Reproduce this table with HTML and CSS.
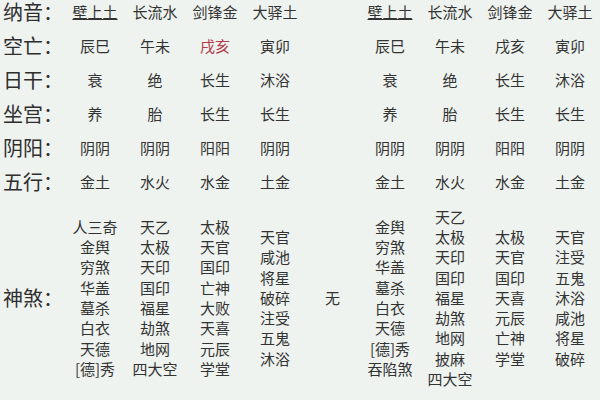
FILE: index.html
```html
<!DOCTYPE html>
<html lang="zh-CN">
<head>
<meta charset="utf-8">
<title>八字排盘</title>
<link rel="stylesheet" href="styles.css">
</head>
<body>
<div class="chart">
  <div class="row">
    <div class="label">纳音：</div>
    <div class="cell"><span class="link">壁上土</span></div>
    <div class="cell">长流水</div>
    <div class="cell">剑锋金</div>
    <div class="cell">大驿土</div>
    <div class="mid"></div>
    <div class="cell"><span class="link">壁上土</span></div>
    <div class="cell">长流水</div>
    <div class="cell">剑锋金</div>
    <div class="cell">大驿土</div>
  </div>
  <div class="row">
    <div class="label">空亡：</div>
    <div class="cell">辰巳</div>
    <div class="cell">午未</div>
    <div class="cell red">戌亥</div>
    <div class="cell">寅卯</div>
    <div class="mid"></div>
    <div class="cell">辰巳</div>
    <div class="cell">午未</div>
    <div class="cell">戌亥</div>
    <div class="cell">寅卯</div>
  </div>
  <div class="row">
    <div class="label">日干：</div>
    <div class="cell">衰</div>
    <div class="cell">绝</div>
    <div class="cell">长生</div>
    <div class="cell">沐浴</div>
    <div class="mid"></div>
    <div class="cell">衰</div>
    <div class="cell">绝</div>
    <div class="cell">长生</div>
    <div class="cell">沐浴</div>
  </div>
  <div class="row">
    <div class="label">坐宫：</div>
    <div class="cell">养</div>
    <div class="cell">胎</div>
    <div class="cell">长生</div>
    <div class="cell">长生</div>
    <div class="mid"></div>
    <div class="cell">养</div>
    <div class="cell">胎</div>
    <div class="cell">长生</div>
    <div class="cell">长生</div>
  </div>
  <div class="row">
    <div class="label">阴阳：</div>
    <div class="cell">阴阴</div>
    <div class="cell">阴阴</div>
    <div class="cell">阳阳</div>
    <div class="cell">阴阴</div>
    <div class="mid"></div>
    <div class="cell">阴阴</div>
    <div class="cell">阴阴</div>
    <div class="cell">阳阳</div>
    <div class="cell">阴阴</div>
  </div>
  <div class="row">
    <div class="label">五行：</div>
    <div class="cell">金土</div>
    <div class="cell">水火</div>
    <div class="cell">水金</div>
    <div class="cell">土金</div>
    <div class="mid"></div>
    <div class="cell">金土</div>
    <div class="cell">水火</div>
    <div class="cell">水金</div>
    <div class="cell">土金</div>
  </div>
  <div class="row tall">
    <div class="label">神煞：</div>
    <div class="cell list">
      <span>人三奇</span><span>金舆</span><span>穷煞</span><span>华盖</span><span>墓杀</span><span>白衣</span><span>天德</span><span>[德]秀</span>
    </div>
    <div class="cell list">
      <span>天乙</span><span>太极</span><span>天印</span><span>国印</span><span>福星</span><span>劫煞</span><span>地网</span><span>四大空</span>
    </div>
    <div class="cell list">
      <span>太极</span><span>天官</span><span>国印</span><span>亡神</span><span>大败</span><span>天喜</span><span>元辰</span><span>学堂</span>
    </div>
    <div class="cell list">
      <span>天官</span><span>咸池</span><span>将星</span><span>破碎</span><span>注受</span><span>五鬼</span><span>沐浴</span>
    </div>
    <div class="mid">无</div>
    <div class="cell list">
      <span>金舆</span><span>穷煞</span><span>华盖</span><span>墓杀</span><span>白衣</span><span>天德</span><span>[德]秀</span><span>吞陷煞</span>
    </div>
    <div class="cell list">
      <span>天乙</span><span>太极</span><span>天印</span><span>国印</span><span>福星</span><span>劫煞</span><span>地网</span><span>披麻</span><span>四大空</span>
    </div>
    <div class="cell list">
      <span>太极</span><span>天官</span><span>国印</span><span>天喜</span><span>元辰</span><span>亡神</span><span>学堂</span>
    </div>
    <div class="cell list">
      <span>天官</span><span>注受</span><span>五鬼</span><span>沐浴</span><span>咸池</span><span>将星</span><span>破碎</span>
    </div>
  </div>
  <div class="row">
    <div class="label">胎元：</div>
    <div class="cell"></div>
    <div class="cell"></div>
    <div class="cell"></div>
    <div class="cell"></div>
    <div class="mid"></div>
    <div class="cell"></div>
    <div class="cell"></div>
    <div class="cell"></div>
    <div class="cell"></div>
  </div>
</div>
</body>
</html>
```

FILE: styles.css
```css
html, body {
  margin: 0;
  padding: 0;
  background: #eff3f0;
  overflow: hidden;
}

body {
  width: 600px;
  height: 400px;
  font-family: "Noto Sans CJK SC", "Noto Sans", sans-serif;
  color: #333333;
}

.chart {
  margin-top: -5px;
}

.row {
  display: grid;
  grid-template-columns: 65px repeat(4, 60px) 55px repeat(4, 60px);
  align-items: center;
  height: 34px;
}

.row.tall {
  height: 198px;
}

.label {
  font-size: 20px;
  line-height: 24px;
  padding-left: 3px;
  white-space: nowrap;
  color: #2e2e2e;
}

.cell,
.mid {
  font-size: 15px;
  line-height: 20px;
  text-align: center;
  white-space: nowrap;
}

.link {
  text-decoration: underline;
  text-underline-offset: 1px;
}

.red {
  color: #b03c4a;
}

.list {
  display: flex;
  flex-direction: column;
  align-items: center;
  justify-content: center;
  line-height: 20.3px;
}
```
